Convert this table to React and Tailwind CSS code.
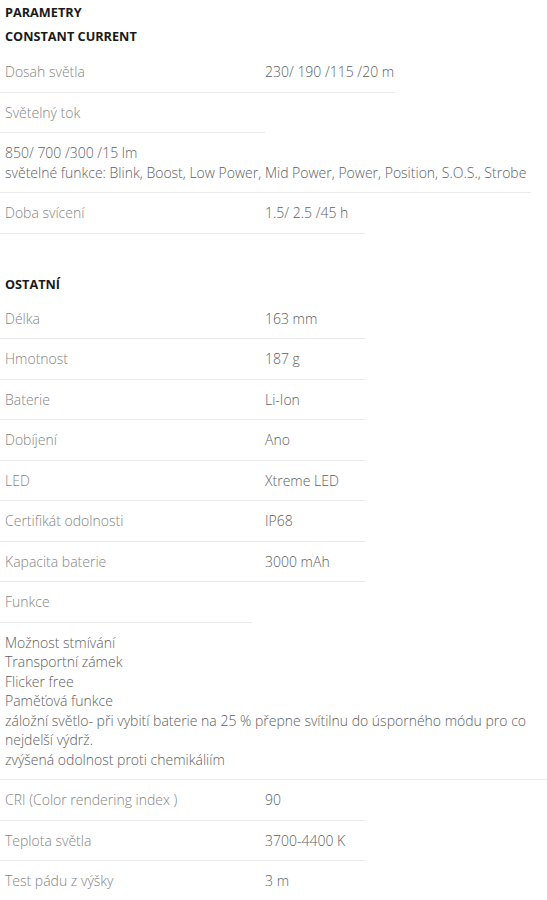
import React from "react";

const L = "text-[#858585]";
const V = "text-[#5e5e5e]";

function Row({ label, value, w = "w-[365px]" }) {
  return (
    <div className={`flex ${w} border-b border-[#e9e9e9] py-[10px] leading-[19.5px]`}>
      <div className={`w-[260px] shrink-0 px-[5px] ${L}`}>{label}</div>
      {value !== undefined && <div className={`px-[5px] whitespace-nowrap ${V}`}>{value}</div>}
    </div>
  );
}

function Block({ lines, w }) {
  return (
    <div className={`${w} border-b border-[#e9e9e9] py-[10px] px-[5px] leading-[19.5px] ${V}`}>
      {lines.map((l, i) => (
        <div key={i}>{l}</div>
      ))}
    </div>
  );
}

export default function App() {
  return (
    <div className="bg-white w-[547px] min-h-[900px] text-[14px] font-light" style={{ fontFamily: '"Open Sans", sans-serif' }}>
      <div className="px-[5px] pt-[3px] leading-[18px] text-[12.7px] font-bold text-[#1a1a1a]">PARAMETRY</div>
      <div className="px-[5px] mt-[6px] leading-[18px] text-[12.7px] font-bold text-[#1a1a1a]">CONSTANT CURRENT</div>
      <div className="mt-[7px]">
        <Row label="Dosah světla" value="230/ 190 /115 /20 m" w="w-[395px]" />
        <Row label="Světelný tok" w="w-[265px]" />
        <div className={`w-fit border-b border-[#e9e9e9] py-[10px] px-[5px] leading-[19.5px] whitespace-nowrap ${V}`}>
          <div>850/ 700 /300 /15 lm</div>
          <div>světelné funkce: Blink, Boost, Low Power, Mid Power, Power, Position, S.O.S., Strobe</div>
        </div>
        <Row label="Doba svícení" value="1.5/ 2.5 /45 h" />
      </div>
      <div className="px-[5px] mt-[41px] leading-[18px] text-[12.7px] font-bold text-[#1a1a1a]">OSTATNÍ</div>
      <div className="mt-[6px]">
        <Row label="Délka" value="163 mm" />
        <Row label="Hmotnost" value="187 g" />
        <Row label="Baterie" value="Li-Ion" />
        <Row label="Dobíjení" value="Ano" />
        <Row label="LED" value="Xtreme LED" />
        <Row label="Certifikát odolnosti" value="IP68" />
        <Row label="Kapacita baterie" value="3000 mAh" />
        <Row label="Funkce" w="w-[252px]" />
        <Block
          w="w-full"
          lines={[
            "Možnost stmívání",
            "Transportní zámek",
            "Flicker free",
            "Paměťová funkce",
            "záložní světlo- při vybití baterie na 25 % přepne svítilnu do úsporného módu pro co nejdelší výdrž.",
            "zvýšená odolnost proti chemikáliím",
          ]}
        />
        <Row label="CRI (Color rendering index )" value="90" />
        <Row label="Teplota světla" value="3700-4400 K" />
        <Row label="Test pádu z výšky" value="3 m" />
      </div>
    </div>
  );
}
